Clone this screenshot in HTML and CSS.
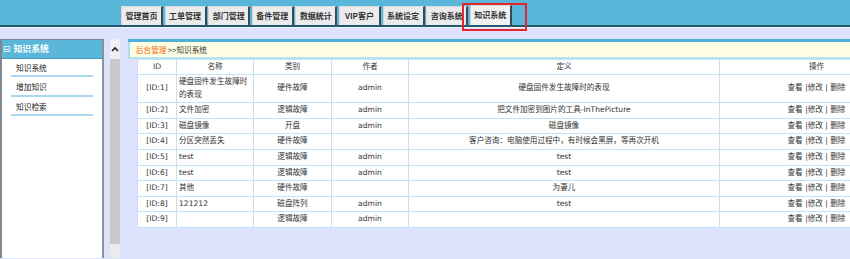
FILE: index.html
```html
<!DOCTYPE html>
<html lang="zh-CN">
<head>
<meta charset="utf-8">
<title>知识系统</title>
<link rel="stylesheet" href="styles.css">
</head>
<body>
<div class="top">
  <div class="tabs">
    <div class="tab">管理首页</div>
    <div class="tab">工单管理</div>
    <div class="tab">部门管理</div>
    <div class="tab">备件管理</div>
    <div class="tab">数据统计</div>
    <div class="tab">VIP客户</div>
    <div class="tab">系统设定</div>
    <div class="tab">咨询系统</div>
    <div class="tab active">知识系统</div>
  </div>
  <div class="mark"></div>
</div>
<div class="main">
  <div class="side">
    <div class="side-head"><span class="fold">⊟</span>知识系统</div>
    <ul class="menu">
      <li>知识系统</li>
      <li>增加知识</li>
      <li>知识检索</li>
    </ul>
  </div>
  <div class="scroll">
    <div class="scroll-btn"><svg width="8" height="6" viewBox="0 0 8 6"><path d="M1 5 L4 2 L7 5" fill="none" stroke="#222" stroke-width="1.6"/></svg></div>
    <div class="scroll-thumb"></div>
    <div class="scroll-track"></div>
  </div>
  <div class="content">
    <div class="crumb"><span class="home">后台管理</span>&nbsp;&gt;&gt;知识系统</div>
    <table class="grid">
      <colgroup>
        <col class="c-id"><col class="c-name"><col class="c-type"><col class="c-author"><col class="c-def"><col class="c-op">
      </colgroup>
      <thead>
        <tr><th>ID</th><th>名称</th><th>类别</th><th>作者</th><th>定义</th><th>操作</th></tr>
      </thead>
      <tbody>
        <tr><td>[ID:1]</td><td class="l">硬盘固件发生故障时的表现</td><td>硬件故障</td><td>admin</td><td>硬盘固件发生故障时的表现</td><td>查看 |修改 | 删除</td></tr>
        <tr><td>[ID:2]</td><td class="l">文件加密</td><td>逻辑故障</td><td>admin</td><td>把文件加密到图片的工具-InThePicture</td><td>查看 |修改 | 删除</td></tr>
        <tr><td>[ID:3]</td><td class="l">磁盘镜像</td><td>开盘</td><td>admin</td><td>磁盘镜像</td><td>查看 |修改 | 删除</td></tr>
        <tr><td>[ID:4]</td><td class="l">分区突然丢失</td><td>硬件故障</td><td></td><td>客户咨询：电脑使用过程中，有时候会黑屏，等再次开机</td><td>查看 |修改 | 删除</td></tr>
        <tr><td>[ID:5]</td><td class="l">test</td><td>逻辑故障</td><td>admin</td><td>test</td><td>查看 |修改 | 删除</td></tr>
        <tr><td>[ID:6]</td><td class="l">test</td><td>逻辑故障</td><td>admin</td><td>test</td><td>查看 |修改 | 删除</td></tr>
        <tr><td>[ID:7]</td><td class="l">其他</td><td>硬件故障</td><td></td><td>为妻儿</td><td>查看 |修改 | 删除</td></tr>
        <tr><td>[ID:8]</td><td class="l">121212</td><td>磁盘阵列</td><td>admin</td><td>test</td><td>查看 |修改 | 删除</td></tr>
        <tr><td>[ID:9]</td><td class="l"></td><td>逻辑故障</td><td>admin</td><td></td><td>查看 |修改 | 删除</td></tr>
      </tbody>
    </table>
  </div>
</div>
</body>
</html>
```
FILE: styles.css
```css
html, body {
  margin: 0;
  padding: 0;
  overflow: hidden;
  height: 100%;
}
body {
  background: #dde2fd;
  font-family: "DejaVu Sans", "Noto Sans CJK SC", sans-serif;
  color: #333;
}
.top {
  position: relative;
  height: 25px;
  background: #5bb7d9;
  border-bottom: 2px solid #24586c;
  box-shadow: 0 1px 0 #f4f6ff;
}
.tabs {
  display: flex;
  align-items: flex-end;
  gap: 1.6px;
  height: 25px;
  padding-left: 121px;
}
.tab {
  box-sizing: border-box;
  width: 42px;
  height: 19px;
  background: #ebebeb;
  border: 1px solid #6f7f88;
  border-top-color: #d8dde0;
  border-left-color: #cfd5d8;
  border-right: 2px solid #3a4a52;
  border-bottom: none;
  font-family: "Noto Sans CJK SC", sans-serif;
  font-size: 8px;
  font-weight: bold;
  line-height: 18px;
  text-align: center;
  color: #333;
  white-space: nowrap;
}
.tab.active {
  height: 20px;
  background: #f0f0f0;
  line-height: 17px;
}
.mark {
  position: absolute;
  left: 462px;
  top: 3px;
  width: 61px;
  height: 24px;
  border: 2px solid #e3262b;
}
.main {
  display: flex;
  align-items: stretch;
  box-sizing: border-box;
  height: calc(100vh - 28px);
  padding-top: 12px;
}
.side {
  box-sizing: border-box;
  width: 104px;
  background: #fff;
  border: 2px solid #7d8791;
  border-top-width: 1px;
  border-bottom: none;
  border-right-color: #8a939b;
}
.side-head {
  height: 18px;
  background: #5bb7d9;
  border-bottom: 1px solid #3f97ba;
  color: #fff;
  font-family: "Noto Sans CJK SC", sans-serif;
  font-size: 8.8px;
  font-weight: bold;
  line-height: 18px;
  padding-left: 1px;
}
.fold {
  font-weight: normal;
  font-size: 9px;
  margin-right: 3px;
  font-family: "DejaVu Sans", sans-serif;
}
.menu {
  list-style: none;
  margin: 0;
  padding: 0 0 0 9px;
}
.menu li {
  width: 77px;
  height: 15.3px;
  margin-bottom: 2px;
  border-bottom: 2px solid #a8d8ee;
  font-family: "Noto Sans CJK SC", sans-serif;
  font-size: 7.7px;
  line-height: 15.3px;
  padding-left: 5px;
  color: #222;
}
.menu li:first-child {
  margin-top: 1px;
}
.scroll {
  width: 10px;
  margin-left: 6px;
  display: flex;
  flex-direction: column;
}
.scroll-btn {
  height: 20px;
  background: #eeeff3;
  display: flex;
  justify-content: center;
  align-items: center;
}
.scroll-thumb {
  height: 185px;
  background: #c9c9c9;
}
.scroll-track {
  flex: 1;
  background: #ececec;
}
.content {
  margin-left: 8px;
  flex: 1;
  min-width: 0;
  overflow: hidden;
  border-top: 3px solid #4cb1d8;
  margin-top: -0.5px;
}
.crumb {
  height: 15px;
  background: #fcfde2;
  border-left: 2px solid #a9def0;
  border-bottom: 2px solid #b9e2f0;
  padding-left: 6px;
  font-family: "Noto Sans CJK SC", sans-serif;
  font-size: 7.6px;
  line-height: 15px;
  color: #333;
}
.home {
  color: #f26a10;
}
.grid {
  margin-left: 9px;
  width: 776px;
  table-layout: fixed;
  border-collapse: collapse;
  background: #fff;
  font-size: 7.6px;
  color: #333;
}
.c-id { width: 39px; }
.c-name { width: 77px; }
.c-type { width: 78px; }
.c-author { width: 77px; }
.c-def { width: 311px; }
.c-op { width: 194px; }
.grid th, .grid td {
  border: 1px solid #c4e2f5;
  padding: 1px 2px;
  line-height: 12.6px;
  text-align: center;
  font-weight: normal;
  vertical-align: middle;
}
.grid td.l {
  text-align: left;
}
```
